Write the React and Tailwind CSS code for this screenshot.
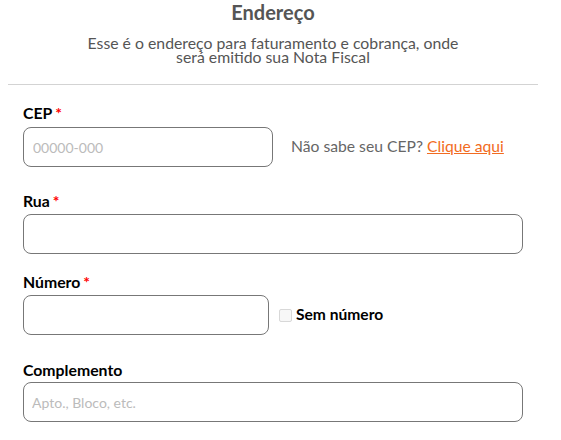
export default function App() {
    return (
        <div className="bg-white min-h-screen font-['Lato','Liberation_Sans',sans-serif]">
            <div className="w-[530px] ml-2">

                {/* Header */}
                <div className="text-center">
                    <h1 className="text-[20px] leading-[24px] font-bold text-[#555]">Endereço</h1>
                    <p className="mt-[12px] text-[15.8px] leading-[14px] text-[#555]">
                        Esse é o endereço para faturamento e cobrança, onde
                        <br />
                        será emitido sua Nota Fiscal
                    </p>
                </div>

                <div className="mt-[20px] h-px bg-[#d3d3d3]" />

                <form className="px-[15px] pt-[18px]">

                    {/* CEP */}
                    <label className="block text-[15.8px] leading-[20px] font-bold text-black mb-[4px]">
                        CEP<span className="text-[#f00] ml-[3px]">*</span>
                    </label>
                    <div className="flex items-center">
                        <input
                            placeholder="00000-000"
                            className="w-[250px] h-[40px] rounded-[8px] border border-[#777] px-[9px] text-[14px] placeholder:text-[#bbb] outline-none"
                        />
                        <span className="ml-[18px] text-[15.7px] text-[#666]">
                            Não sabe seu CEP? <a href="#" className="text-[#f26b21] underline">Clique aqui</a>
                        </span>
                    </div>

                    {/* Rua */}
                    <label className="block mt-[24px] text-[15.8px] leading-[20px] font-bold text-black mb-[3px]">
                        Rua<span className="text-[#f00] ml-[3px]">*</span>
                    </label>
                    <input className="w-full h-[40px] rounded-[8px] border border-[#777] px-[9px] text-[14px] outline-none" />

                    {/* Número */}
                    <label className="block mt-[18px] text-[15.8px] leading-[20px] font-bold text-black mb-[3px]">
                        Número<span className="text-[#f00] ml-[3px]">*</span>
                    </label>
                    <div className="flex items-center">
                        <input className="w-[246px] h-[40px] rounded-[8px] border border-[#777] px-[9px] text-[14px] outline-none" />
                        <span className="ml-[10px] w-[13px] h-[13px] rounded-[2px] border border-[#d8d8d8] bg-[#f7f7f7]" />
                        <span className="ml-[4px] text-[15.6px] font-bold text-black">Sem número</span>
                    </div>

                    {/* Complemento */}
                    <label className="block mt-[25px] text-[15.8px] leading-[20px] font-bold text-black mb-[2px]">
                        Complemento
                    </label>
                    <input
                        placeholder="Apto., Bloco, etc."
                        className="w-full h-[40px] rounded-[8px] border border-[#777] px-[8px] text-[14px] placeholder:text-[#bbb] outline-none"
                    />
                </form>
            </div>
        </div>
    );
}
